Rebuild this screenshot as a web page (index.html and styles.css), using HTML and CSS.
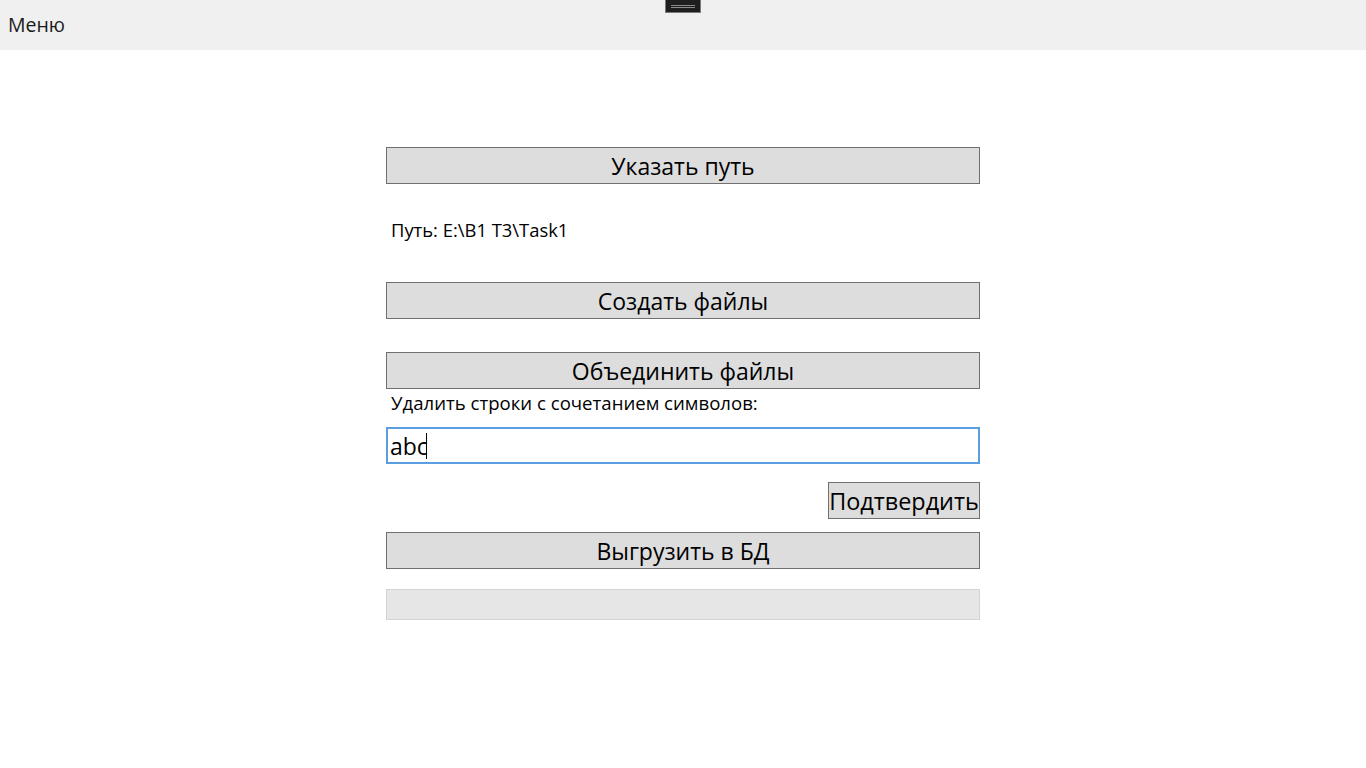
FILE: index.html
```html
<!DOCTYPE html>
<html lang="ru">
<head>
<meta charset="utf-8">
<link rel="stylesheet" href="styles.css">
</head>
<body>
<div class="topbar">
  <span class="menu">Меню</span>
  <div class="grabber"><span class="grab-line"></span></div>
</div>
<main class="panel">
  <div class="btn btn-first">Указать путь</div>
  <div class="path">Путь: E:\B1 T3\Task1</div>
  <div class="btn btn-create">Создать файлы</div>
  <div class="btn btn-merge">Объединить файлы</div>
  <div class="label">Удалить строки с сочетанием символов:</div>
  <div class="input"><span class="input-text">abc</span><span class="caret"></span></div>
  <div class="row-right"><div class="btn btn-small">Подтвердить</div></div>
  <div class="btn btn-upload">Выгрузить в БД</div>
  <div class="progress"></div>
</main>
</body>
</html>
```
FILE: styles.css
```css
html, body {
  margin: 0;
  padding: 0;
  background: #ffffff;
  font-family: "Open Sans", "Noto Sans", sans-serif;
  color: #000;
}
.topbar {
  position: relative;
  height: 50px;
  background: #f0f0f0;
  display: flex;
  align-items: flex-start;
}
.menu {
  margin: 13px 0 0 8px;
  font-size: 19.5px;
  line-height: 24px;
  color: #1a1a1a;
}
.grabber {
  position: absolute;
  left: 665px;
  top: 0;
  width: 34px;
  height: 12px;
  background: #1e1e1e;
  border: 1px solid #7a7a7a;
  border-top: none;
  display: flex;
  align-items: center;
  justify-content: center;
}
.grab-line {
  width: 24px;
  height: 3px;
  border-top: 1px solid #8a8a8a;
  border-bottom: 1px solid #8a8a8a;
  box-sizing: border-box;
}
.panel {
  width: 594px;
  margin: 97px auto 0;
  display: flex;
  flex-direction: column;
}
.btn {
  box-sizing: border-box;
  height: 37px;
  padding-top: 1px;
  background: #dddddd;
  border: 1px solid #707070;
  font-size: 23px;
  line-height: 35px;
  text-align: center;
  color: #000;
  overflow: hidden;
}
.path {
  margin: 34px 0 0 5px;
  font-size: 18.4px;
  line-height: 24px;
}
.btn-create { margin-top: 40px; }
.btn-merge { margin-top: 33px; }
.label {
  margin: 1px 0 0 5px;
  font-size: 18.6px;
  line-height: 26px;
}
.input {
  margin-top: 11px;
  box-sizing: border-box;
  height: 37px;
  border: 2px solid #5b9ee0;
  display: flex;
  align-items: center;
  padding-left: 2px;
}
.input-text {
  font-size: 23px;
  line-height: 30px;
}
.caret {
  width: 1px;
  height: 26px;
  background: #000;
  margin-left: -2px;
}
.row-right {
  margin-top: 18px;
  display: flex;
  justify-content: flex-end;
}
.btn-small {
  width: 152px;
  font-size: 23.4px;
}
.btn-upload { margin-top: 13px; }
.progress {
  margin-top: 20px;
  box-sizing: border-box;
  height: 31px;
  background: #e6e6e6;
  border: 1px solid #d4d4d4;
}
```
